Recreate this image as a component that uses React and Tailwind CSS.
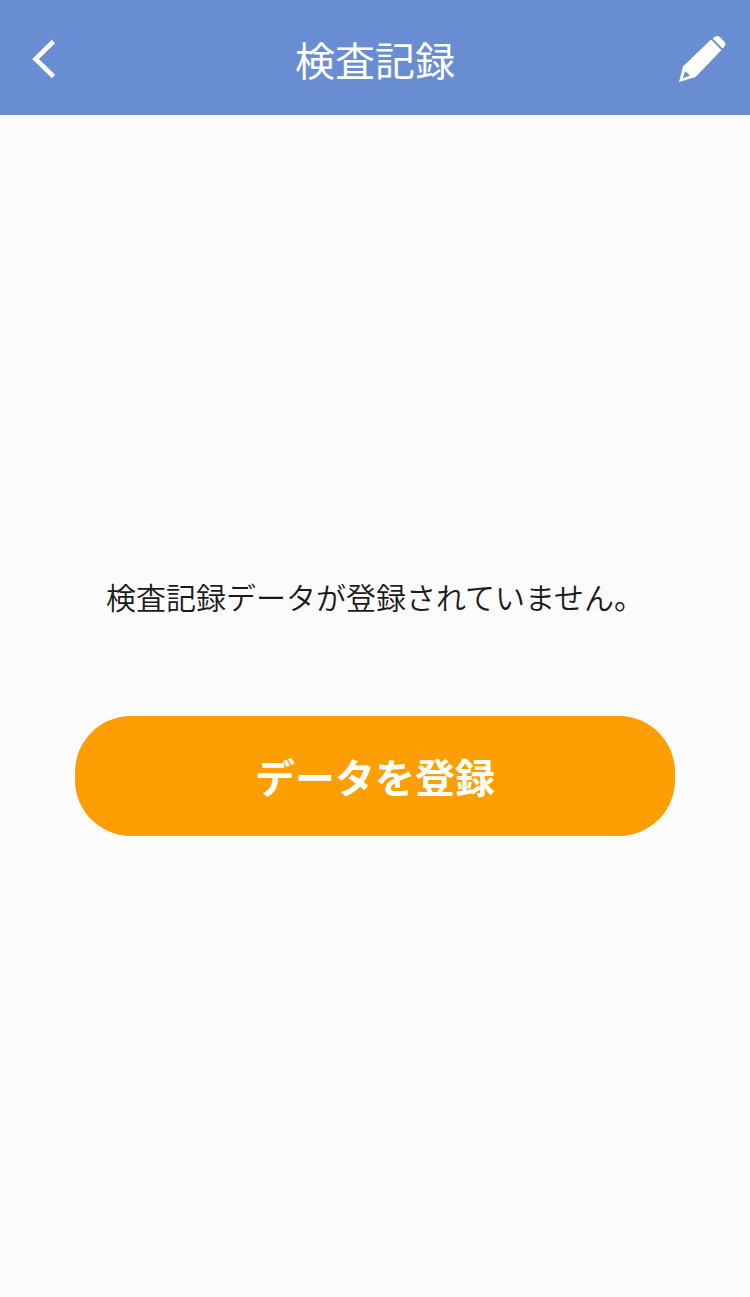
// App.jsx
function BackIcon() {
  return (
    <svg className="w-6 h-10" viewBox="0 0 24 40" fill="none" aria-hidden="true">
      <path d="M21.5 2.5 3.5 20 21.5 37.5" stroke="currentColor" strokeWidth="4.6" />
    </svg>
  );
}

function PencilIcon() {
  return (
    <svg className="w-12 h-12" viewBox="0 0 48 48" fill="currentColor" aria-hidden="true">
      {/* body, with the lead cut out */}
      <path
        fillRule="evenodd"
        d="M33 4.500 43.500 15 17.500 42 1 47 5 31.500ZM7.200 36.200 4.800 43.200 12 40.600Z"
      />
      {/* eraser */}
      <path d="M34.500 3.600 37 1.800Q39.300 0 42 2.200L46.200 6.500Q48.300 9 46.600 11.200L44.700 13.600Z" />
    </svg>
  );
}

export default function App() {
  return (
    <div className="min-h-screen flex flex-col bg-[#fbfbfb] text-[#1a1a1a] font-['Noto_Sans_CJK_JP',sans-serif]">
      {/* HEADER */}
      <header className="w-full h-[115px] pt-[3px] flex items-center justify-between bg-[#698dd2] text-white">
        <button type="button" aria-label="戻る" className="w-24 h-24 pl-8 flex items-center">
          <BackIcon />
        </button>
        <h1 className="text-[40px] leading-[60px]">検査記録</h1>
        <button
          type="button"
          aria-label="編集"
          className="w-24 h-24 pr-6 flex items-center justify-end"
        >
          <PencilIcon />
        </button>
      </header>

      {/* MAIN CONTENT */}
      <main className="flex-1 flex flex-col items-center justify-center gap-25">
        <p className="text-[30px] leading-[40px] font-[350]">
          検査記録データが登録されていません。
        </p>
        <button
          type="button"
          className="w-4/5 h-[120px] rounded-[56px] bg-[#fd9f02] text-white text-[40px] leading-[60px] font-bold"
        >
          データを登録
        </button>
      </main>
    </div>
  );
}
